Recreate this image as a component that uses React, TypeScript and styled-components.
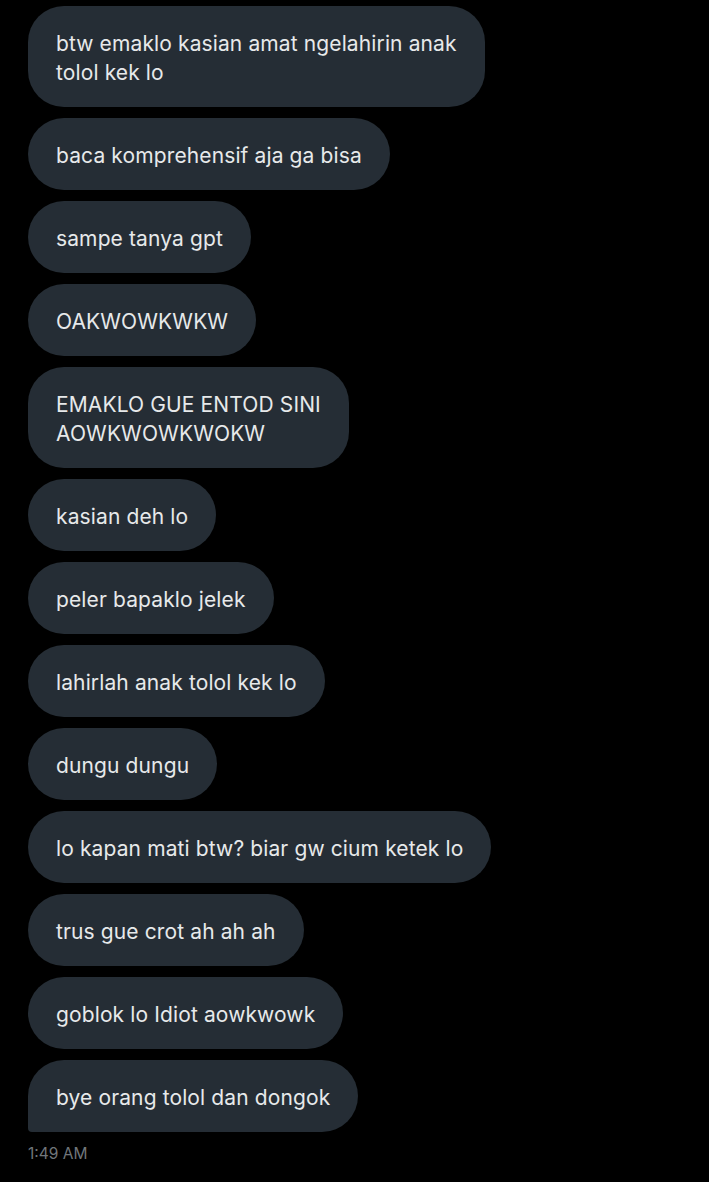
import React from "react";
import styled, { createGlobalStyle } from "styled-components";

const Global = createGlobalStyle`
  html, body { margin: 0; padding: 0; background: #000; }
  body { font-family: Inter, "Noto Sans", sans-serif; -webkit-font-smoothing: antialiased; }
`;

const Thread = styled.div`
  display: flex;
  flex-direction: column;
  align-items: flex-start;
  gap: 11px;
  padding: 6px 28px 0 28px;
  min-height: 1182px;
  box-sizing: border-box;
  background: #000;
`;

const Bubble = styled.div<{ $last?: boolean }>`
  box-sizing: border-box;
  padding: 23px 28px 20px;
  background: #252d35;
  color: #e7e9ea;
  font-size: 21px;
  line-height: 29px;
  letter-spacing: 0.12px;
  white-space: nowrap;
  border-radius: 36px;
  border-bottom-left-radius: ${(p) => (p.$last ? "4px" : "36px")};
`;

const Line = styled.span`
  display: block;
`;

const Time = styled.div`
  margin-top: 1px;
  color: #71767b;
  font-size: 15.5px;
  line-height: 20px;
`;

const messages: string[][] = [
  ["btw emaklo kasian amat ngelahirin anak", "tolol kek lo"],
  ["baca komprehensif aja ga bisa"],
  ["sampe tanya gpt"],
  ["OAKWOWKWKW"],
  ["EMAKLO GUE ENTOD SINI", "AOWKWOWKWOKW"],
  ["kasian deh lo"],
  ["peler bapaklo jelek"],
  ["lahirlah anak tolol kek lo"],
  ["dungu dungu"],
  ["lo kapan mati btw? biar gw cium ketek lo"],
  ["trus gue crot ah ah ah"],
  ["goblok lo Idiot aowkwowk"],
  ["bye orang tolol dan dongok"],
];

export default function App() {
  return (
    <>
      <Global />
      <Thread>
        {messages.map((lines, i) => (
          <Bubble key={i} $last={i === messages.length - 1}>
            {lines.map((l, j) => (
              <Line key={j}>{l}</Line>
            ))}
          </Bubble>
        ))}
        <Time>1:49 AM</Time>
      </Thread>
    </>
  );
}
